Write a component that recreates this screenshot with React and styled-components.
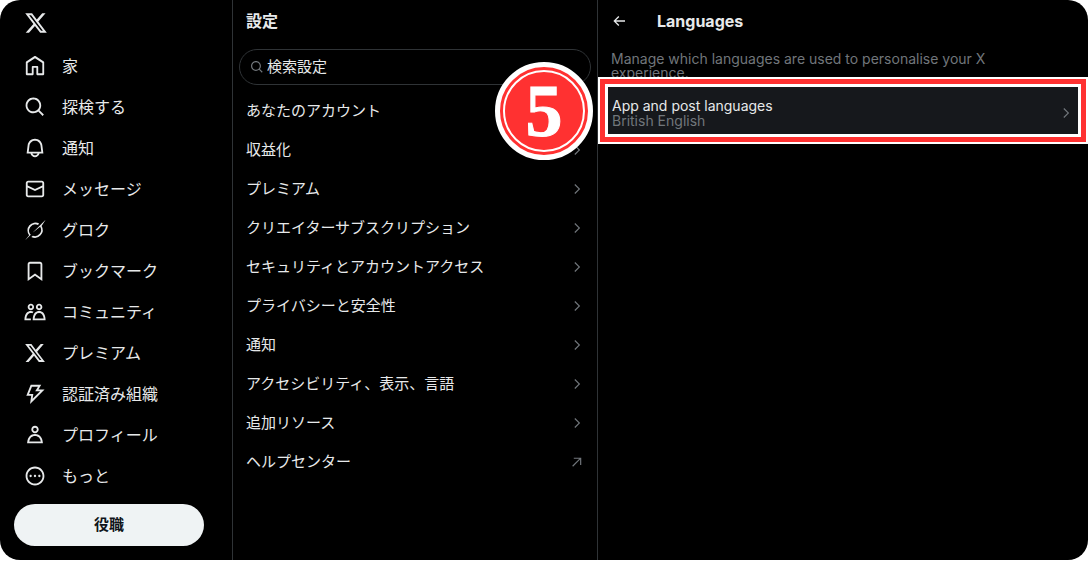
import React from "react";
import styled, { createGlobalStyle } from "styled-components";

const GlobalStyle = createGlobalStyle`
  *, *::before, *::after { box-sizing: border-box; }
  body {
    margin: 0;
    background: #fff;
    font-family: Inter, "Noto Sans CJK JP", sans-serif;
    color: #e7e9ea;
  }
  button, input { font: inherit; color: inherit; }
  h1, h2, p, ul { margin: 0; padding: 0; }
  ul { list-style: none; }
  a { color: inherit; text-decoration: none; }
`;

const Frame = styled.div`
  display: grid;
  grid-template-columns: 232px 366px minmax(0, 1fr);
  min-height: 560px;
  overflow: hidden;
  border-radius: 20px;
  background: #000;
`;

const Sidebar = styled.header`
  display: flex;
  flex-direction: column;
  padding: 0 14px;
`;

const LogoLink = styled.a`
  display: flex;
  align-items: center;
  height: 45px;
  padding-left: 10px;
`;

const NavLink = styled.a`
  display: flex;
  align-items: center;
  gap: 16px;
  height: 41px;
  padding-left: 10px;
  font-size: 16px;
  line-height: 24px;
  white-space: nowrap;
`;

const PostButton = styled.button`
  width: 190px;
  height: 42px;
  margin-top: 8px;
  border: 0;
  border-radius: 21px;
  background: #eff3f4;
  color: #0f1419;
  font-size: 15px;
  font-weight: 700;
  line-height: 20px;
`;

const Icon = styled.svg`
  display: block;
  flex: none;
  width: ${(p) => p.$size}px;
  height: ${(p) => p.$size}px;
  fill: ${(p) => (p.$muted ? "#71767b" : "#e7e9ea")};
`;

const SettingsColumn = styled.section`
  position: relative;
  border: solid #2f3336;
  border-width: 0 1px;
`;

const Title = styled.h1`
  font-size: 16px;
  line-height: 24px;
  font-weight: 700;
`;

const SettingsHead = styled.div`
  padding: 9px 13px 16px;
`;

const SearchBox = styled.label`
  display: flex;
  align-items: center;
  gap: 3px;
  height: 36px;
  margin: 0 6px;
  padding: 0 10px;
  border: 1px solid #2f3336;
  border-radius: 18px;
`;

const SearchInput = styled.input`
  flex: 1;
  min-width: 0;
  padding: 0;
  border: 0;
  outline: 0;
  background: transparent;
  font-size: 15px;
  line-height: 20px;
  &::placeholder { color: #e7e9ea; opacity: 1; }
`;

const SettingsList = styled.ul`
  margin-top: 6px;
`;

const SettingLink = styled.a`
  display: flex;
  align-items: center;
  justify-content: space-between;
  height: 39px;
  padding: 0 13px;
  font-size: 15px;
  line-height: 20px;
`;

const StepBadge = styled.div`
  position: absolute;
  top: 62px;
  right: 4px;
  z-index: 2;
  display: grid;
  place-items: center;
  width: 98px;
  height: 98px;
  border: 5px solid #fff;
  border-radius: 50%;
  background: #ff3131;
`;

const BadgeRing = styled.div`
  display: grid;
  place-items: center;
  width: 82px;
  height: 82px;
  border: 2px solid #fff;
  border-radius: 50%;
  color: #fff;
  font-family: "Liberation Serif", serif;
  font-size: 74px;
  font-weight: 700;
  line-height: 74px;
  -webkit-text-stroke: 1px #fff;
`;

const Detail = styled.main`
  min-width: 0;
`;

const DetailHead = styled.div`
  display: flex;
  align-items: center;
  gap: 30px;
  height: 42px;
  padding-left: 13px;
`;

const BackButton = styled.button`
  display: flex;
  padding: 0;
  border: 0;
  background: none;
`;

const Description = styled.p`
  padding: 10px 80px 0 13px;
  color: #71767b;
  font-size: 14px;
  line-height: 14px;
`;

const Highlight = styled.div`
  position: relative;
  margin-top: -3px;
  padding: 5px;
  border: 2px solid #fff;
  background: #ff3131;
`;

const LanguageRow = styled.a`
  display: flex;
  align-items: center;
  justify-content: space-between;
  padding: 11px 5px 6px 4px;
  border: 3px solid #fff;
  background: #16181c;
  font-size: 14px;
  line-height: 15px;
`;

const RowValue = styled.div`
  color: #71767b;
`;

const X_PATH =
  "M18.244 2.25h3.308l-7.227 8.26 8.502 11.24H16.17l-5.214-6.817L4.99 21.75H1.68l7.73-8.835L1.254 2.25H8.08l4.713 6.231zm-1.161 17.52h1.833L7.084 4.126H5.117z";
const SEARCH_PATH =
  "M10.25 3.75c-3.59 0-6.5 2.91-6.5 6.5s2.91 6.5 6.5 6.5c1.795 0 3.419-.726 4.596-1.904 1.178-1.177 1.904-2.801 1.904-4.596 0-3.59-2.91-6.5-6.5-6.5zm-8.5 6.5c0-4.694 3.806-8.5 8.5-8.5s8.5 3.806 8.5 8.5c0 1.986-.682 3.815-1.824 5.262l4.781 4.781-1.414 1.414-4.781-4.781c-1.447 1.142-3.276 1.824-5.262 1.824-4.694 0-8.5-3.806-8.5-8.5z";
const CHEVRON_PATH =
  "M14.586 12L7.543 4.96l1.414-1.42L17.414 12l-8.457 8.46-1.414-1.42L14.586 12z";
const EXTERNAL_PATH =
  "M6.5 4.5h12.8v12.8h-2V7.9L5.2 20l-1.4-1.4L15.9 6.5H6.5z";
const BACK_PATH =
  "M7.414 13l5.043 5.04-1.414 1.42L3.586 12l7.457-7.46 1.414 1.42L7.414 11H21v2H7.414z";

const NAV = [
  ["家", "M21.591 7.146L12.52 1.157c-.316-.21-.724-.21-1.04 0l-9.071 5.99c-.26.173-.409.456-.409.757v13.183c0 .502.418.913.929.913h6.638c.511 0 .929-.41.929-.913v-7.075h3.008v7.075c0 .502.418.913.929.913h6.639c.51 0 .928-.41.928-.913V7.904c0-.301-.158-.584-.408-.758zM20 20l-4.5.01.011-7.097c0-.502-.418-.913-.928-.913H9.44c-.511 0-.929.41-.929.913L8.5 20H4V8.773l8.011-5.342L20 8.764z"],
  ["探検する", SEARCH_PATH],
  ["通知", "M19.993 9.042C19.48 5.017 16.054 2 11.996 2s-7.49 3.021-7.999 7.051L2.866 18H7.1c.463 2.282 2.481 4 4.9 4s4.437-1.718 4.9-4h4.236l-1.143-8.958zM12 20c-1.306 0-2.417-.835-2.829-2h5.658c-.412 1.165-1.523 2-2.829 2zm-6.866-4l.847-6.698C6.364 6.272 8.941 4 11.996 4s5.627 2.268 6.013 5.295L18.864 16H5.134z"],
  ["メッセージ", "M1.998 5.5c0-1.381 1.119-2.5 2.5-2.5h15c1.381 0 2.5 1.119 2.5 2.5v13c0 1.381-1.119 2.5-2.5 2.5h-15c-1.381 0-2.5-1.119-2.5-2.5v-13zm2.5-.5c-.276 0-.5.224-.5.5v2.764l8 3.638 8-3.636V5.5c0-.276-.224-.5-.5-.5h-15zm15.5 5.463l-8 3.636-8-3.638V18.5c0 .276.224.5.5.5h15c.276 0 .5-.224.5-.5v-8.037z"],
  ["グロク", "M16.6 5A8.6 8.6 0 0 0 5.6 17.8L1 23.4 7.4 17.2A6.7 6.7 0 0 1 15.2 6.6zM23.6.8L19.2 7.5A8.6 8.6 0 0 1 8 19.6L9.6 18.2A6.7 6.7 0 0 0 17.6 8.4L9.3 15z"],
  ["ブックマーク", "M4 4.5C4 3.12 5.119 2 6.5 2h11C18.881 2 20 3.12 20 4.5v18.44l-8-5.71-8 5.71V4.5zM6.5 4c-.276 0-.5.22-.5.5v14.56l6-4.29 6 4.29V4.5c0-.28-.224-.5-.5-.5h-11z"],
  ["コミュニティ", "M7.501 19.917L7.471 21H.472l.029-1.027c.184-6.618 3.736-8.977 7-8.977.963 0 1.95.212 2.87.672-.444.478-.851 1.03-1.212 1.656-.507-.204-1.054-.329-1.658-.329-2.767 0-4.57 2.223-4.938 6.004H7.56c-.023.302-.05.599-.059.918zm15.998.056L23.528 21H9.472l.029-1.027c.184-6.618 3.736-8.977 7-8.977s6.816 2.358 7 8.977zM21.437 19c-.367-3.781-2.17-6.004-4.938-6.004s-4.57 2.223-4.938 6.004h9.875zm-4.938-9c-.799 0-1.527-.279-2.116-.73-.836-.64-1.384-1.638-1.384-2.77 0-1.93 1.567-3.5 3.5-3.5s3.5 1.57 3.5 3.5c0 1.132-.548 2.13-1.384 2.77-.589.451-1.317.73-2.116.73zm-1.5-3.5c0 .827.673 1.5 1.5 1.5s1.5-.673 1.5-1.5-.673-1.5-1.5-1.5-1.5.673-1.5 1.5zM7.5 3C9.433 3 11 4.57 11 6.5S9.433 10 7.5 10 4 8.43 4 6.5 5.567 3 7.5 3zm0 2C6.673 5 6 5.673 6 6.5S6.673 8 7.5 8 9 7.327 9 6.5 8.327 5 7.5 5z"],
  ["プレミアム", X_PATH],
  ["認証済み組織", "M7.323 2h11.443l-3 5h6.648L6.586 22.886 7.847 14H2.523l4.8-12zm1.354 2l-3.2 8h4.677l-.739 5.205L17.586 9h-5.352l3-5H8.677z"],
  ["プロフィール", "M5.651 19h12.698c-.337-1.8-1.023-3.21-1.945-4.19C15.318 13.65 13.838 13 12 13s-3.317.65-4.404 1.81c-.922.98-1.608 2.39-1.945 4.19zm.486-5.56C7.627 11.85 9.648 11 12 11s4.373.85 5.863 2.44c1.477 1.58 2.366 3.8 2.632 6.46l.11 1.1H3.395l.11-1.1c.266-2.66 1.155-4.88 2.632-6.46zM12 4c-1.105 0-2 .9-2 2s.895 2 2 2 2-.9 2-2-.895-2-2-2zM8 6c0-2.21 1.791-4 4-4s4 1.79 4 4-1.791 4-4 4-4-1.79-4-4z"],
  ["もっと", "M3.75 12c0-4.56 3.69-8.25 8.25-8.25s8.25 3.69 8.25 8.25-3.69 8.25-8.25 8.25S3.75 16.56 3.75 12zM12 1.75C6.34 1.75 1.75 6.34 1.75 12S6.34 22.25 12 22.25 22.25 17.66 22.25 12 17.66 1.75 12 1.75zm-4.75 11.5c.69 0 1.25-.56 1.25-1.25s-.56-1.25-1.25-1.25S6 11.31 6 12s.56 1.25 1.25 1.25zm9.5 0c.69 0 1.25-.56 1.25-1.25s-.56-1.25-1.25-1.25-1.25.56-1.25 1.25.56 1.25 1.25 1.25zM13.25 12c0 .69-.56 1.25-1.25 1.25s-1.25-.56-1.25-1.25.56-1.25 1.25-1.25 1.25.56 1.25 1.25z"],
];

const SETTINGS = [
  "あなたのアカウント",
  "収益化",
  "プレミアム",
  "クリエイターサブスクリプション",
  "セキュリティとアカウントアクセス",
  "プライバシーと安全性",
  "通知",
  "アクセシビリティ、表示、言語",
  "追加リソース",
  "ヘルプセンター",
];

function Glyph({ path, size = 22, muted = false }) {
  return (
    <Icon viewBox="0 0 24 24" $size={size} $muted={muted} aria-hidden="true">
      <path d={path} />
    </Icon>
  );
}

export default function App() {
  return (
    <>
      <GlobalStyle />
      <Frame>
        <Sidebar>
          <LogoLink href="#home" aria-label="X">
            <Glyph path={X_PATH} size={24} />
          </LogoLink>
          <nav>
            {NAV.map(([label, path]) => (
              <NavLink href="#" key={label}>
                <Glyph path={path} />
                {label}
              </NavLink>
            ))}
          </nav>
          <PostButton type="button">役職</PostButton>
        </Sidebar>

        <SettingsColumn>
          <SettingsHead>
            <Title>設定</Title>
          </SettingsHead>
          <SearchBox>
            <Glyph path={SEARCH_PATH} size={14} muted />
            <SearchInput type="search" placeholder="検索設定" aria-label="検索設定" />
          </SearchBox>
          <SettingsList>
            {SETTINGS.map((label, i) => (
              <li key={label}>
                <SettingLink href="#">
                  {label}
                  <Glyph
                    path={i === SETTINGS.length - 1 ? EXTERNAL_PATH : CHEVRON_PATH}
                    size={14}
                    muted
                  />
                </SettingLink>
              </li>
            ))}
          </SettingsList>
          <StepBadge>
            <BadgeRing>5</BadgeRing>
          </StepBadge>
        </SettingsColumn>

        <Detail>
          <DetailHead>
            <BackButton type="button" aria-label="Back">
              <Glyph path={BACK_PATH} size={16} />
            </BackButton>
            <Title as="h2">Languages</Title>
          </DetailHead>
          <Description>
            Manage which languages are used to personalise your X experience.
          </Description>
          <Highlight>
            <LanguageRow href="#">
              <div>
                <div>App and post languages</div>
                <RowValue>British English</RowValue>
              </div>
              <Glyph path={CHEVRON_PATH} size={14} muted />
            </LanguageRow>
          </Highlight>
        </Detail>
      </Frame>
    </>
  );
}
